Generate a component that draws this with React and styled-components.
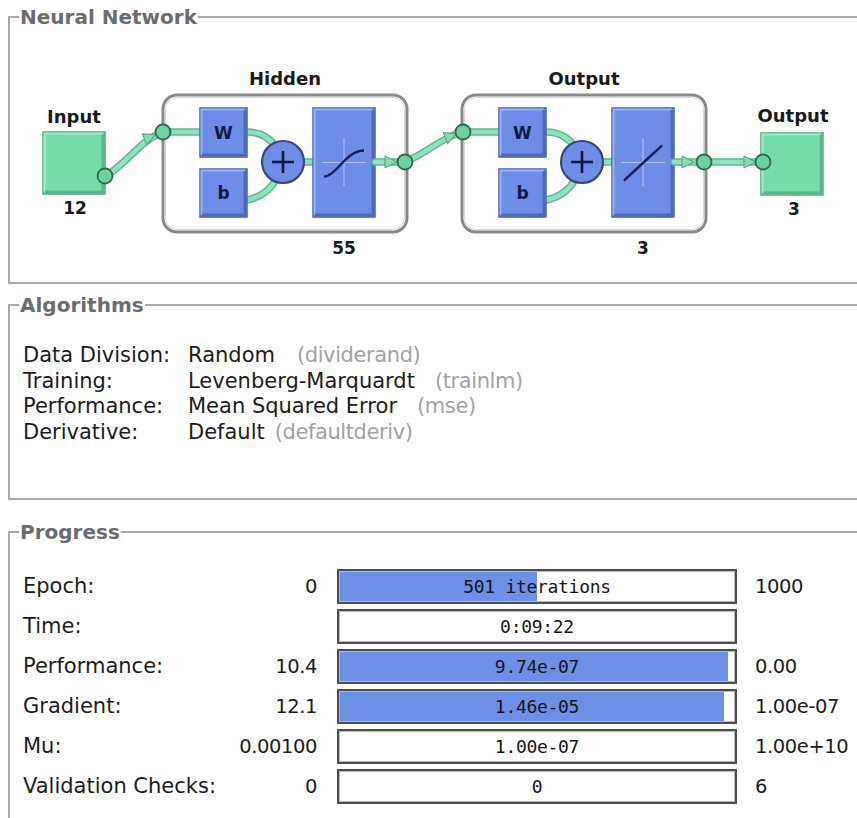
import React from 'react';
import styled, { createGlobalStyle } from 'styled-components';

const GlobalStyle = createGlobalStyle`
  html, body {
    margin: 0;
    padding: 0;
    overflow: hidden;
    background: #ffffff;
  }
  body {
    font-family: "DejaVu Sans", "Liberation Sans", sans-serif;
  }
`;

const Page = styled.div`
  padding: 5px 0 0 8px;
  display: flex;
  flex-direction: column;
`;

// group boxes run off the right edge of the window, so no right border
const Group = styled.fieldset`
  margin: 0;
  margin-top: ${(p) => p.$gap || 0}px;
  padding: 0;
  border: 2px solid #a8a8a8;
  border-right: none;
  min-width: 0;
`;

const Title = styled.legend`
  margin-left: 9px;
  padding: 0 1px;
  font-family: "DejaVu Sans", sans-serif;
  font-weight: bold;
  font-size: 20px;
  line-height: 24px;
  color: #6c6c6c;
`;

const Diagram = styled.svg`
  display: block;
  font-family: "DejaVu Sans", sans-serif;
`;

const AlgoList = styled.div`
  display: grid;
  grid-template-columns: 165px auto;
  padding: 26px 0 52px 13px;
  font-size: 21px;
  line-height: 25.7px;
  color: #1c1c1c;
`;

const Hint = styled.span`
  margin-left: ${(p) => p.$gap}px;
  color: #a3a3a3;
  letter-spacing: -0.4px;
`;

const ProgressGrid = styled.div`
  display: grid;
  grid-template-columns: 294px 400px auto;
  column-gap: 20px;
  row-gap: 5px;
  padding: 25px 0 40px 13px;
  font-size: 21px;
  color: #1c1c1c;
`;

const Stat = styled.div`
  display: flex;
  justify-content: space-between;
  align-items: center;
  height: 35px;
`;

const Num = styled.span`
  font-size: 19.5px;
  letter-spacing: -0.4px;
`;

const Limit = styled.div`
  display: flex;
  align-items: center;
  height: 35px;
  margin-left: -2px;
  font-size: 19.5px;
  letter-spacing: -0.4px;
`;

const Bar = styled.div`
  box-sizing: border-box;
  height: 35px;
  border: 2px solid #4e4e4e;
  background: #ffffff;
`;

const Track = styled.div`
  box-sizing: border-box;
  height: 100%;
  border: 1px solid #b6b6b6;
  display: flex;
  align-items: center;
  justify-content: center;
  font-family: "DejaVu Sans Mono", "Liberation Mono", monospace;
  font-size: 18px;
  letter-spacing: -0.3px;
  color: #151515;
  background: linear-gradient(
    to right,
    #6e8fe6 ${(p) => p.$fill}%,
    #ffffff ${(p) => p.$fill}%
  );
`;

const MINT = '#76dcab';
const BLUE = '#6d8de6';

function Block({ x, y, w, h, label }) {
  return (
    <g>
      <rect x={x} y={y} width={w} height={h} fill={BLUE} stroke="#4a62b0" strokeWidth="1.5" />
      <path d={`M${x + 1.5} ${y + h - 2} V${y + 1.5} H${x + w - 2}`} stroke="#9cb2f4" strokeWidth="2" fill="none" />
      <path d={`M${x + w - 2} ${y + 2} V${y + h - 2} H${x + 2}`} stroke="#5068bd" strokeWidth="3" fill="none" />
      {label && (
        <text x={x + w / 2} y={y + h / 2 + 6} textAnchor="middle" fontWeight="bold" fontSize="17" fill="#111a44">
          {label}
        </text>
      )}
    </g>
  );
}

function Square({ x, y, s }) {
  return (
    <g>
      <rect x={x} y={y} width={s} height={s} fill={MINT} stroke="#56a883" strokeWidth="1.5" />
      <path d={`M${x + 1.5} ${y + s - 2} V${y + 1.5} H${x + s - 2}`} stroke="#a4ecc9" strokeWidth="2" fill="none" />
      <path d={`M${x + s - 2} ${y + 2} V${y + s - 2} H${x + 2}`} stroke="#5fb68e" strokeWidth="3" fill="none" />
    </g>
  );
}

function Wire({ d }) {
  return (
    <g fill="none" strokeLinecap="round">
      <path d={d} stroke="#5fb990" strokeWidth="7.5" />
      <path d={d} stroke="#8fe2bd" strokeWidth="4.5" />
    </g>
  );
}

function Arrow({ x, y, a }) {
  return (
    <polygon
      points="-6,-6 6,0 -6,6"
      transform={`translate(${x} ${y}) rotate(${a})`}
      fill="#86dcb4"
      stroke="#4fa47d"
      strokeWidth="1"
    />
  );
}

function Node({ x, y }) {
  return <circle cx={x} cy={y} r="7.5" fill="#6fd0a0" stroke="#2e6a4f" strokeWidth="1.8" />;
}

function Sum({ x, y }) {
  return (
    <g>
      <circle cx={x} cy={y} r="21" fill={BLUE} stroke="#3a4878" strokeWidth="2.2" />
      <path d={`M${x - 11} ${y} H${x + 11} M${x} ${y - 11} V${y + 11}`} stroke="#10183a" strokeWidth="2.6" />
    </g>
  );
}

function Transfer({ x, y, w, h, kind }) {
  const cx = x + w / 2;
  const cy = y + h / 2;
  const curve =
    kind === 'tansig'
      ? `M${cx - 20} ${cy + 14} C${cx - 8} ${cy + 14} ${cx + 2} ${cy - 12} ${cx + 20} ${cy - 12}`
      : `M${cx - 19} ${cy + 18} L${cx + 19} ${cy - 17}`;
  return (
    <g>
      <Block x={x} y={y} w={w} h={h} />
      <path d={`M${cx - 22} ${cy} H${cx + 22} M${cx} ${cy - 24} V${cy + 24}`} stroke="#aec0f4" strokeWidth="1.2" />
      <path d={curve} stroke="#182060" strokeWidth="2.4" fill="none" />
    </g>
  );
}

function Layer({ x, title, size, kind }) {
  return (
    <g>
      <text x={x + 122} y={85} textAnchor="middle" fontWeight="bold" fontSize="18" fill="#1a1a1a">
        {title}
      </text>
      <rect x={x} y={95} width={244} height={137} rx="14" fill="none" stroke="#8a8a8a" strokeWidth="3" />
      <rect x={x + 2.5} y={97.5} width={239} height={132} rx="12" fill="none" stroke="#d6d6d6" strokeWidth="1" />
      <Wire d={`M${x} ${132} H${x + 37}`} />
      <Wire d={`M${x + 84} ${132} C${x + 100} ${132} ${x + 108} ${140} ${x + 114} ${148}`} />
      <Wire d={`M${x + 84} ${200} C${x + 100} ${197} ${x + 108} ${188} ${x + 113} ${180}`} />
      <Wire d={`M${x + 140} ${162} H${x + 150}`} />
      <Block x={x + 37} y={108} w={47} h={49} label="W" />
      <Block x={x + 37} y={169} w={47} h={48} label="b" />
      <Sum x={x + 120} y={162} />
      <Transfer x={x + 150} y={108} w={62} h={109} kind={kind} />
      <text x={x + 181} y={254} textAnchor="middle" fontWeight="bold" fontSize="17" fill="#1a1a1a">
        {size}
      </text>
    </g>
  );
}

function Network() {
  return (
    <Diagram width="847" height="253" viewBox="10 29 847 253">
      <text x="74" y="123" textAnchor="middle" fontWeight="bold" fontSize="18" fill="#1a1a1a">Input</text>
      <Square x={43} y={132} s={62} />
      <text x="75" y="214" textAnchor="middle" fontWeight="bold" fontSize="17" fill="#1a1a1a">12</text>

      <Wire d="M105 176 C125 166 140 140 163 132" />
      <Arrow x={150} y={137} a={-22} />

      <Layer x={163} title="Hidden" size="55" kind="tansig" />

      <Wire d="M375 162 H404" />
      <Arrow x={391} y={162} a={0} />
      <Wire d="M404 162 C425 155 440 138 462 132" />
      <Arrow x={451} y={136} a={-20} />

      <Layer x={462} title="Output" size="3" kind="purelin" />

      <Wire d="M674 162 H762" />
      <Arrow x={688} y={162} a={0} />
      <Arrow x={750} y={162} a={0} />

      <text x="793" y="122" textAnchor="middle" fontWeight="bold" fontSize="18" fill="#1a1a1a">Output</text>
      <Square x={761} y={133} s={62} />
      <text x="794" y="215" textAnchor="middle" fontWeight="bold" fontSize="17" fill="#1a1a1a">3</text>

      <Node x={105} y={176} />
      <Node x={163} y={132} />
      <Node x={405} y={162} />
      <Node x={463} y={132} />
      <Node x={704} y={162} />
      <Node x={763} y={162} />
    </Diagram>
  );
}

const algorithms = [
  { label: 'Data Division:', value: 'Random', hint: '(dividerand)', gap: 22 },
  { label: 'Training:', value: 'Levenberg-Marquardt', hint: '(trainlm)', gap: 20 },
  { label: 'Performance:', value: 'Mean Squared Error', hint: '(mse)', gap: 20 },
  { label: 'Derivative:', value: 'Default', hint: '(defaultderiv)', gap: 10 },
];

const progress = [
  { label: 'Epoch:', start: '0', text: '501 iterations', fill: 50.1, end: '1000' },
  { label: 'Time:', start: '', text: '0:09:22', fill: 0, end: '' },
  { label: 'Performance:', start: '10.4', text: '9.74e-07', fill: 98.4, end: '0.00' },
  { label: 'Gradient:', start: '12.1', text: '1.46e-05', fill: 97.4, end: '1.00e-07' },
  { label: 'Mu:', start: '0.00100', text: '1.00e-07', fill: 0, end: '1.00e+10' },
  { label: 'Validation Checks:', start: '0', text: '0', fill: 0, end: '6' },
];

export default function App() {
  return (
    <>
      <GlobalStyle />
      <Page>
        <Group>
          <Title>Neural Network</Title>
          <Network />
        </Group>

        <Group $gap={9}>
          <Title>Algorithms</Title>
          <AlgoList>
            {algorithms.map((a) => (
              <React.Fragment key={a.label}>
                <span>{a.label}</span>
                <span>
                  {a.value}
                  <Hint $gap={a.gap}>{a.hint}</Hint>
                </span>
              </React.Fragment>
            ))}
          </AlgoList>
        </Group>

        <Group $gap={20}>
          <Title>Progress</Title>
          <ProgressGrid>
            {progress.map((r) => (
              <React.Fragment key={r.label}>
                <Stat>
                  <span>{r.label}</span>
                  <Num>{r.start}</Num>
                </Stat>
                <Bar>
                  <Track $fill={r.fill}>{r.text}</Track>
                </Bar>
                <Limit>{r.end}</Limit>
              </React.Fragment>
            ))}
          </ProgressGrid>
        </Group>
      </Page>
    </>
  );
}
